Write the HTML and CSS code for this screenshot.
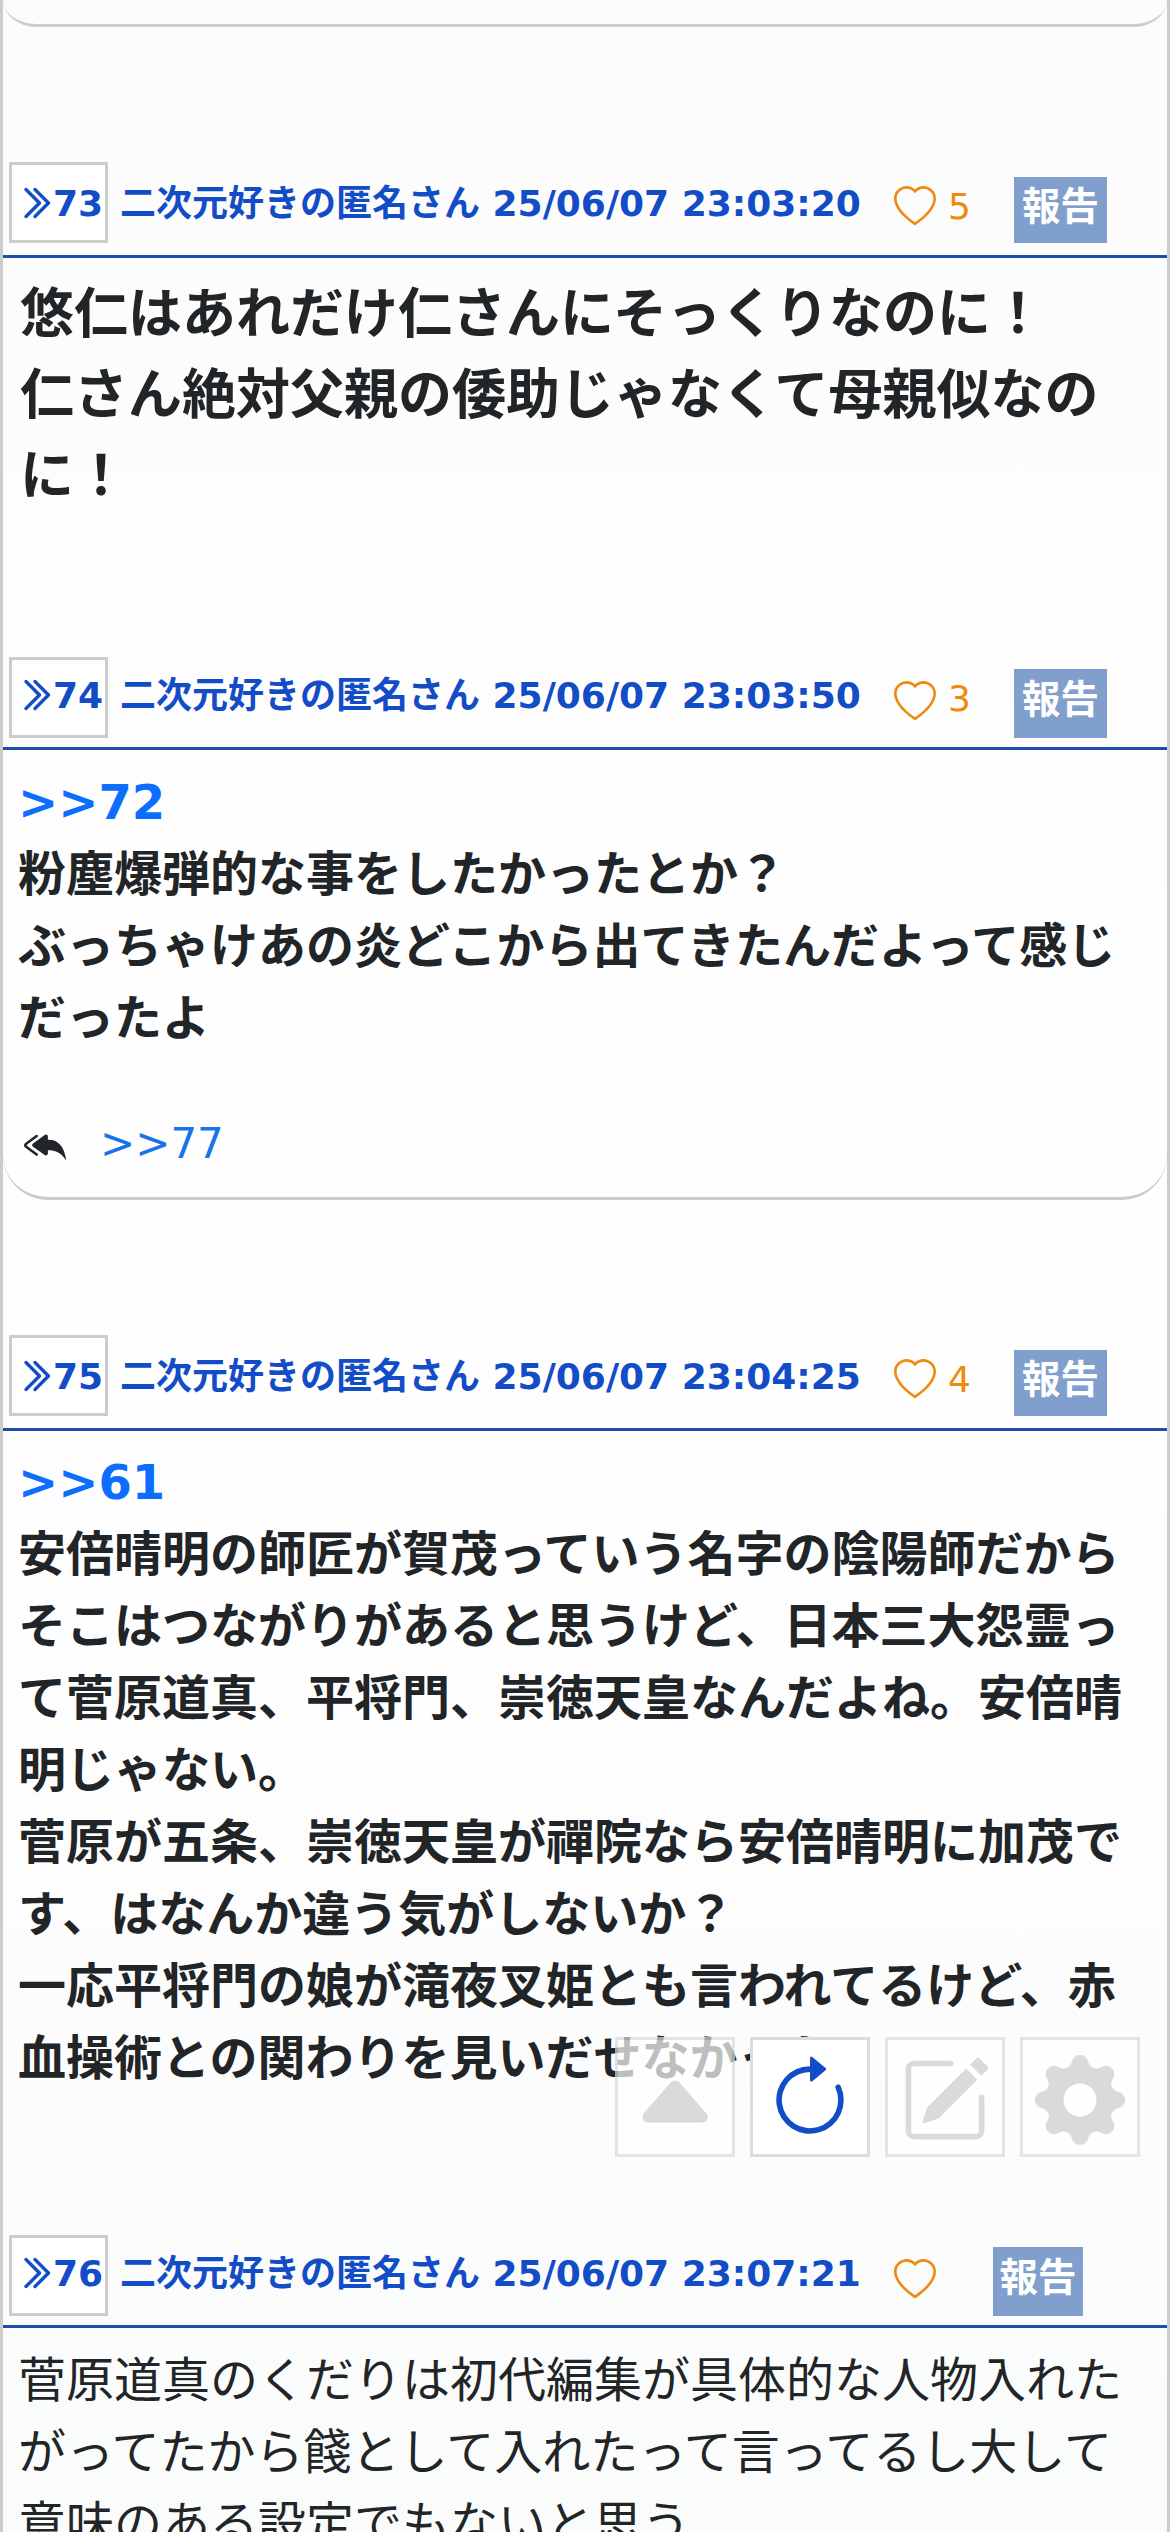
FILE: index.html
```html
<!DOCTYPE html>
<html lang="ja">
<head>
<meta charset="utf-8">
<title>スレッド</title>
<link rel="stylesheet" href="styles.css">
</head>
<body>
<svg class="sprite" aria-hidden="true">
  <symbol id="chevrons" viewBox="0 0 16 16"><path d="M3.646 1.646a.5.5 0 0 1 .708 0l6 6a.5.5 0 0 1 0 .708l-6 6a.5.5 0 0 1-.708-.708L9.293 8 3.646 2.354a.5.5 0 0 1 0-.708z"/><path d="M7.646 1.646a.5.5 0 0 1 .708 0l6 6a.5.5 0 0 1 0 .708l-6 6a.5.5 0 0 1-.708-.708L13.293 8 7.646 2.354a.5.5 0 0 1 0-.708z"/></symbol>
  <symbol id="heart" viewBox="0 0 16 16"><path d="m8 2.748-.717-.737C5.6.281 2.514.878 1.4 3.053c-.523 1.023-.641 2.5.314 4.385.92 1.815 2.834 3.989 6.286 6.357 3.452-2.368 5.365-4.542 6.286-6.357.955-1.886.838-3.362.314-4.385C13.486.878 10.4.28 8.717 2.01L8 2.748zM8 15C-7.333 4.868 3.279-3.04 7.824 1.143c.06.055.119.112.176.171a3.12 3.12 0 0 1 .176-.17C12.72-3.042 23.333 4.867 8 15z"/></symbol>
  <symbol id="reply" viewBox="0 0 16 16"><path d="M8.021 11.9 3.453 8.62a.719.719 0 0 1 0-1.238L8.021 4.1a.716.716 0 0 1 1.079.619V6c1.5 0 6 0 7 8-2.5-4.5-7-4-7-4v1.281c0 .56-.606.898-1.079.62z"/><path d="M5.232 4.293a.5.5 0 0 1-.106.7L1.114 7.945a.5.5 0 0 1-.042.028.147.147 0 0 0 0 .252.503.503 0 0 1 .042.028l4.012 2.954a.5.5 0 1 1-.593.805L.539 9.073a1.147 1.147 0 0 1 0-1.946l3.994-2.94a.5.5 0 0 1 .699.106z"/></symbol>
</svg>
<main class="thread">
  <div class="card-end"></div>

  <article class="post post-73">
    <header class="post-head">
      <a class="num"><svg class="num-icon"><use href="#chevrons"/></svg>73</a>
      <span class="meta">二次元好きの匿名さん 25/06/07 23:03:20</span>
      <svg class="heart"><use href="#heart"/></svg><span class="count">5</span>
      <button class="report">報告</button>
    </header>
    <div class="body body-large">悠仁はあれだけ仁さんにそっくりなのに！<br>仁さん絶対父親の倭助じゃなくて母親似なのに！</div>
  </article>

  <article class="post post-74">
    <header class="post-head tight">
      <a class="num"><svg class="num-icon"><use href="#chevrons"/></svg>74</a>
      <span class="meta">二次元好きの匿名さん 25/06/07 23:03:50</span>
      <svg class="heart"><use href="#heart"/></svg><span class="count">3</span>
      <button class="report">報告</button>
    </header>
    <div class="body body-bold"><a class="anchor">&gt;&gt;72</a><br>粉塵爆弾的な事をしたかったとか？<br>ぶっちゃけあの炎どこから出てきたんだよって感じだったよ</div>
    <div class="replies"><svg class="reply-icon"><use href="#reply"/></svg><a class="reply-link">&gt;&gt;77</a></div>
  </article>

  <article class="post post-75">
    <header class="post-head">
      <a class="num"><svg class="num-icon"><use href="#chevrons"/></svg>75</a>
      <span class="meta">二次元好きの匿名さん 25/06/07 23:04:25</span>
      <svg class="heart"><use href="#heart"/></svg><span class="count">4</span>
      <button class="report">報告</button>
    </header>
    <div class="body body-bold"><a class="anchor">&gt;&gt;61</a><br>安倍晴明の師匠が賀茂っていう名字の陰陽師だからそこはつながりがあると思うけど、日本三大怨霊って菅原道真、平将門、崇徳天皇なんだよね。安倍晴明じゃない。<br>菅原が五条、崇徳天皇が禪院なら安倍晴明に加茂です、はなんか違う気がしないか？<br>一応平将門の娘が滝夜叉姫とも言われてるけど、赤血操術との関わりを見いだせなかった</div>
  </article>

  <article class="post post-76">
    <header class="post-head tight">
      <a class="num"><svg class="num-icon"><use href="#chevrons"/></svg>76</a>
      <span class="meta">二次元好きの匿名さん 25/06/07 23:07:21</span>
      <svg class="heart"><use href="#heart"/></svg><span class="count empty"></span>
      <button class="report narrow">報告</button>
    </header>
    <div class="body">菅原道真のくだりは初代編集が具体的な人物入れたがってたから餞として入れたって言ってるし大して意味のある設定でもないと思う</div>
  </article>
</main>

<nav class="tools">
  <button class="tool faded"><svg class="tool-icon" viewBox="0 0 16 16"><path d="m7.247 4.86-4.796 5.481c-.566.647-.106 1.659.753 1.659h9.592a1 1 0 0 0 .753-1.659l-4.796-5.48a1 1 0 0 0-1.506 0z"/></svg></button>
  <button class="tool reload"><svg class="tool-icon" viewBox="0 0 16 16"><path d="M8 3a5 5 0 1 0 4.546 2.914.5.5 0 0 1 .908-.417A6 6 0 1 1 8 2v1z"/><path d="M8 4.466V.534a.25.25 0 0 1 .41-.192l2.36 1.966c.12.1.12.284 0 .384L8.41 4.658A.25.25 0 0 1 8 4.466z"/></svg></button>
  <button class="tool faded"><svg class="tool-icon" viewBox="0 0 16 16"><path d="M15.502 1.94a.5.5 0 0 1 0 .706L14.459 3.69l-2-2L13.502.646a.5.5 0 0 1 .707 0l1.293 1.293zm-1.75 2.456-2-2L4.939 9.21a.5.5 0 0 0-.121.196l-.805 2.414a.25.25 0 0 0 .316.316l2.414-.805a.5.5 0 0 0 .196-.12l6.813-6.814z"/><path d="M1 13.5A1.5 1.5 0 0 0 2.5 15h11a1.5 1.5 0 0 0 1.5-1.5v-6a.5.5 0 0 0-1 0v6a.5.5 0 0 1-.5.5h-11a.5.5 0 0 1-.5-.5v-11a.5.5 0 0 1 .5-.5H9a.5.5 0 0 0 0-1H2.5A1.5 1.5 0 0 0 1 2.5v11z"/></svg></button>
  <button class="tool faded"><svg class="tool-icon" viewBox="0 0 16 16"><path d="M9.405 1.05c-.413-1.4-2.397-1.4-2.81 0l-.1.34a1.464 1.464 0 0 1-2.105.872l-.31-.17c-1.283-.698-2.686.705-1.987 1.987l.169.311c.446.82.023 1.841-.872 2.105l-.34.1c-1.4.413-1.4 2.397 0 2.81l.34.1a1.464 1.464 0 0 1 .872 2.105l-.17.31c-.698 1.283.705 2.686 1.987 1.987l.311-.169a1.464 1.464 0 0 1 2.105.872l.1.34c.413 1.4 2.397 1.4 2.81 0l.1-.34a1.464 1.464 0 0 1 2.105-.872l.31.17c1.283.698 2.686-.705 1.987-1.987l-.169-.311a1.464 1.464 0 0 1 .872-2.105l.34-.1c1.4-.413 1.4-2.397 0-2.81l-.34-.1a1.464 1.464 0 0 1-.872-2.105l.17-.31c.698-1.283-.705-2.686-1.987-1.987l-.311.169a1.464 1.464 0 0 1-2.105-.872l-.1-.34zM8 10.93a2.929 2.929 0 1 1 0-5.86 2.929 2.929 0 0 1 0 5.858z"/></svg></button>
</nav>
</body>
</html>
```

FILE: styles.css
```css
* { box-sizing: border-box; }

html, body { height: 2532px; overflow: hidden; }

body {
  margin: 0;
  color: #222527;
  font-family: "DejaVu Sans", "Noto Sans CJK JP", sans-serif;
  background: linear-gradient(#fcfcfc 0, #fcfcfc 350px, #fefefe 900px, #fefefe 1500px, #fcfcfc 2050px, #fafbfb 2500px);
}

button { font: inherit; padding: 0; border: 0; }

.sprite { display: none; }

.thread {
  height: 2532px;
  overflow: hidden;
  border: solid #ccc;
  border-width: 0 3px;
}

.card-end {
  height: 27px;
  border-bottom: 3px solid #ccc;
  border-radius: 0 0 45px 45px / 0 0 36px 36px;
}

.post-73 { height: 495px; margin-top: 135px; }
.post-74 {
  height: 543px;
  border-bottom: 3px solid #ccc;
  border-radius: 0 0 45px 45px;
}
.post-75 { height: 900px; margin-top: 135px; }

.post-head {
  display: flex;
  align-items: flex-start;
  height: 96px;
  padding-left: 6px;
  border-bottom: 3px solid #1b4fab;
  font-size: 36px;
  line-height: 54px;
  color: #124cc6;
  --rise: 0px;
}
.post-head.tight { height: 93px; --rise: 3px; }

.num {
  display: flex;
  width: 99px;
  height: 81px;
  padding: calc(12px - var(--rise)) 0 0 5px;
  border: 3px solid #ccc;
  background: #fff;
  font-weight: 700;
  line-height: 54px;
}
.num-icon {
  width: 36px;
  height: 36px;
  margin-top: 8px;
  fill: #124cc6;
  stroke: #124cc6;
  stroke-width: .5;
}

.meta {
  width: 773px;
  padding: calc(15px - var(--rise)) 0 0 12px;
  font-weight: 700;
  white-space: nowrap;
}

.heart {
  width: 42px;
  height: 42px;
  margin-top: 24px;
  margin-left: 13px;
  fill: #ef8a10;
}

.count {
  width: 66px;
  margin-left: 12px;
  padding-top: calc(18px - var(--rise));
  color: #f08a0c;
}
.count.empty { width: 45px; }

.report {
  width: 93px;
  height: calc(66px + var(--rise));
  margin-top: calc(15px - var(--rise));
  padding-bottom: 7px;
  background: #809fcd;
  color: #fff;
  font-size: 38.5px;
  font-weight: 700;
  line-height: 56px;
}
.report.narrow { width: 90px; }

.body {
  padding: 16px 24px 0 15px;
  font-size: 48px;
  line-height: 72px;
  line-break: anywhere;
}
.body-bold { font-weight: 700; }
.post-75 .body { padding-top: 15px; }
.body-large {
  padding-left: 17px;
  font-size: 54px;
  font-weight: 700;
  line-height: 81px;
}

.anchor { color: #0d6efd; }

.replies {
  display: flex;
  margin-top: 60px;
  padding-left: 21px;
  font-size: 42px;
  line-height: 60px;
}
.reply-icon {
  width: 42px;
  height: 42px;
  margin: 10px 34px 0 0;
  fill: #212529;
}
.reply-link { color: #1673ea; }

.tools {
  position: fixed;
  top: 2037px;
  right: 30px;
  display: flex;
  gap: 15px;
}
.tool {
  display: flex;
  justify-content: center;
  width: 120px;
  height: 120px;
  padding-top: 15px;
  border: 3px solid #dcdcdc;
  background: #fff;
}
.tool-icon { width: 90px; height: 90px; fill: #ccc; }
.tool.faded { opacity: .7; border-color: #dadada; }
.tool.reload .tool-icon { fill: #124cc6; }
```
